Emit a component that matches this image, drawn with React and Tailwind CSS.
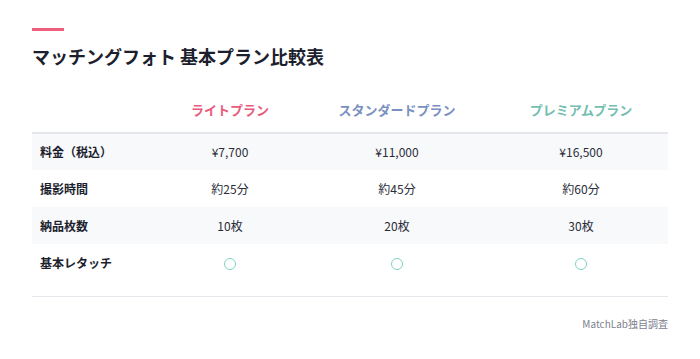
const plans = [
  { name: "ライトプラン", color: "text-[#e85b7b]" },
  { name: "スタンダードプラン", color: "text-[#7a8fc2]" },
  { name: "プレミアムプラン", color: "text-[#74bdb0]" },
];

const rows = [
  { label: "料金（税込）", values: ["¥7,700", "¥11,000", "¥16,500"] },
  { label: "撮影時間", values: ["約25分", "約45分", "約60分"] },
  { label: "納品枚数", values: ["10枚", "20枚", "30枚"] },
  { label: "基本レタッチ", values: ["o", "o", "o"] },
];

function Circle() {
  return <span className="inline-block w-[12px] h-[12px] rounded-full border-[1.5px] border-[#7fd2c6] align-middle" />;
}

export default function App() {
  return (
    <div
      className="w-[700px] h-[359px] bg-white px-8 pt-7"
      style={{ fontFamily: '"Noto Sans CJK JP", "Noto Sans", sans-serif' }}
    >
      <div className="w-8 h-[3px] bg-[#ee5f7d]" />
      <h1 className="mt-[12px] text-[18px] leading-[27px] font-bold text-[#1d1f2e]">
        マッチングフォト 基本プラン比較表
      </h1>

      <table className="mt-[17px] w-full table-fixed border-collapse">
        <colgroup>
          <col className="w-[128px]" />
          <col className="w-[140px]" />
          <col className="w-[194px]" />
          <col className="w-[174px]" />
        </colgroup>
        <thead>
          <tr className="border-b-2 border-[#e4e6eb]">
            <th />
            {plans.map((p) => (
              <th key={p.name} className={`h-[46px] text-[13px] font-bold text-center ${p.color}`}>
                {p.name}
              </th>
            ))}
          </tr>
        </thead>
        <tbody>
          {rows.map((r, i) => (
            <tr key={r.label} className={i % 2 === 0 ? "bg-[#f8f9fb]" : "bg-white"}>
              <td className="h-[37px] pl-2 text-[12px] font-bold text-[#1d1f2e]">{r.label}</td>
              {r.values.map((v, j) => (
                <td key={j} className="text-center text-[12px] text-[#2a2c38]">
                  {v === "o" ? <Circle /> : v}
                </td>
              ))}
            </tr>
          ))}
        </tbody>
      </table>

      <div className="mt-[15px] border-t border-[#e4e6eb] pt-[19px] text-right text-[10px] text-[#7d8090]">
        MatchLab独自調査
      </div>
    </div>
  );
}
